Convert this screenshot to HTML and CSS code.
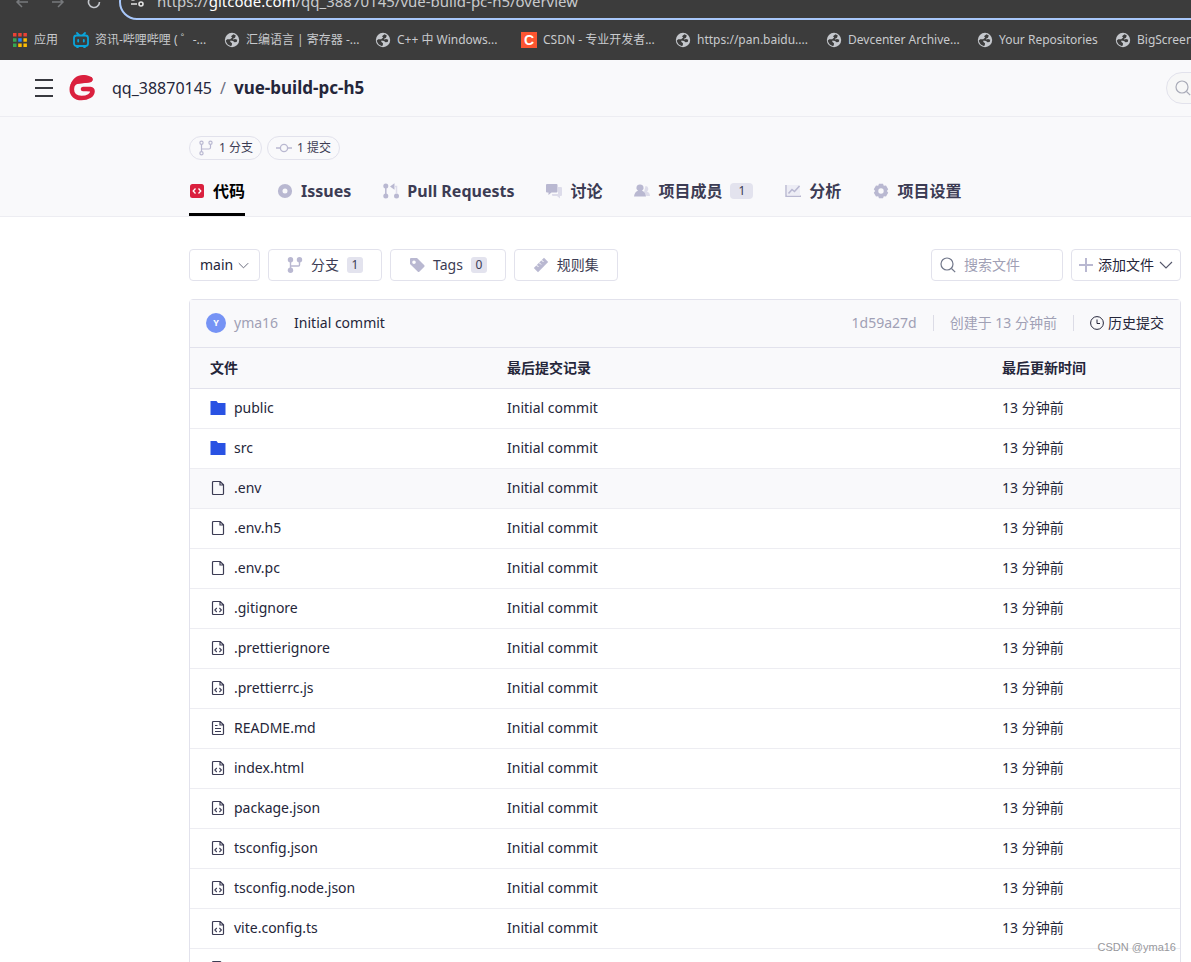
FILE: index.html
```
<!DOCTYPE html>
<html lang="zh-CN">
<head>
<meta charset="utf-8">
<title>qq_38870145/vue-build-pc-h5</title>
<link rel="stylesheet" href="styles.css">
</head>
<body>
<svg class="sprite" aria-hidden="true">
  <symbol id="globe" viewBox="0 0 16 16"><circle cx="8" cy="8" r="7.2" fill="#c4c7cc"/><path d="M9.5 2.2 7 4.2l1.2 1.4-2 1.6H3.2L1.8 8.6c.2 1.400 1 2.800 2 3.800l2.800 1.700 1.200-.6.2-2.200-1.800-1.500.3-1.200 2.500.3 1.500 1.400 2.200-.2.6-2.300-2.200-.8-1.700.6L8.700 7l2.300-1.300.8-2.200z" fill="#3c3c3c"/></symbol>
  <symbol id="branch" viewBox="0 0 16 16"><g fill="none" stroke="#b9b8d1" stroke-width="1.200"><circle cx="3.500" cy="2.800" r="1.600"/><circle cx="12.500" cy="2.800" r="1.600"/><circle cx="3.500" cy="13.200" r="1.600"/><path d="M3.500 4.400v7.200M3.500 9h7.500q1.500 0 1.500-1.500V4.400"/></g></symbol>
  <symbol id="branch-solid" viewBox="0 0 16 16"><g fill="#b9b8d1"><circle cx="3.500" cy="2.800" r="2.700"/><circle cx="12.500" cy="2.800" r="2.700"/><circle cx="3.500" cy="13.200" r="2.700"/></g><path d="M3.500 3v10M3.500 9h8q1 0 1-1V4" fill="none" stroke="#b9b8d1" stroke-width="1.400"/></symbol>
  <symbol id="commit" viewBox="0 0 16 16"><g fill="none" stroke="#b9b8d1" stroke-width="1.300"><circle cx="8" cy="8" r="3.600"/><path d="M0 8h4.400M11.600 8H16"/></g></symbol>
  <symbol id="chevron" viewBox="0 0 14 14"><path d="m1 4 6 6 6-6" fill="none" stroke="#55576b" stroke-width="1.100"/></symbol>
  <symbol id="search" viewBox="0 0 16 16"><g fill="none" stroke="currentColor" stroke-width="1.200"><circle cx="7" cy="7" r="6"/><path d="m11.500 11.500 3.700 3.700"/></g></symbol>
  <symbol id="folder" viewBox="0 0 16 16"><path d="M.5 1h6l1.500 2h7.500v12H.5z" fill="#2952e3"/></symbol>
  <symbol id="file" viewBox="0 0 16 16"><path d="M3.500 1.500h6.700l3.300 3.300v8.700q0 1-1 1h-9q-1 0-1-1v-11q0-1 1-1zM10 1.800v3.200h3.200" fill="none" stroke="#3c3c54" stroke-width="1.200"/></symbol>
  <symbol id="file-code" viewBox="0 0 16 16"><use href="#file"/><path d="m6.800 8-2 2 2 2M9.400 8l2 2-2 2" fill="none" stroke="#3c3c54" stroke-width="1.100"/></symbol>
  <symbol id="file-text" viewBox="0 0 16 16"><use href="#file"/><path d="M5 5.500h2.500M5 8.500h6M5 11.500h6" fill="none" stroke="#3c3c54" stroke-width="1.200"/></symbol>
</svg>

<div class="app">
  <div class="browser">
    <div class="address-row">
      <svg class="nav-icon" viewBox="0 0 16 16"><path d="M14 8H3M8 3 3 8l5 5" fill="none" stroke="#77797c" stroke-width="1.500"/></svg>
      <svg class="nav-icon" viewBox="0 0 16 16"><path d="M2 8h11M8 3l5 5-5 5" fill="none" stroke="#77797c" stroke-width="1.500"/></svg>
      <svg class="nav-icon" viewBox="0 0 16 16"><path d="M13.500 8A5.500 5.500 0 1 1 12 4.200M13 1v4H9" fill="none" stroke="#c4c7cc" stroke-width="1.600"/></svg>
      <div class="address">
        <svg class="icon" viewBox="0 0 16 16"><g fill="none" stroke="#e3e3e3" stroke-width="1.600"><circle cx="4" cy="5" r="2"/><path d="M8 5h6M2 11h6"/><circle cx="12" cy="11" r="2"/></g></svg>
        <span>https://<b>gitcode.com</b>/qq_38870145/vue-build-pc-h5/overview</span>
      </div>
    </div>
    <nav class="bookmarks">
      <a class="bookmark apps" href="#"><svg class="icon" viewBox="0 0 16 16"><path fill="#e94235" d="M1 1h3.500v3.500H1zM6.200 1h3.500v3.500H6.200zM11.400 1h3.500v3.500h-3.500z"/><path fill="#34a853" d="M1 6.200h3.500v3.500H1zM1 11.400h3.500v3.500H1z"/><path fill="#2486fc" d="M6.200 6.200h3.500v3.500H6.200z"/><path fill="#fbbc04" d="M11.400 6.200h3.500v3.500h-3.500zM6.200 11.400h3.500v3.500H6.200zM11.400 11.400h3.500v3.500h-3.500z"/></svg><span>应用</span></a>
      <a class="bookmark" href="#"><svg class="icon" viewBox="0 0 16 16"><g fill="none" stroke="#0ba3d9" stroke-width="1.800" stroke-linecap="round"><rect x="1" y="3.500" width="14" height="10.500" rx="2.500"/><path d="m4 1 2 2M12 1l-2 2M5.200 8v1.500M10.800 8v1.500M4 15h1M11 15h1"/></g></svg><span>资讯-哔哩哔哩 ( ゜-...</span></a>
      <a class="bookmark" href="#"><svg class="icon"><use href="#globe"/></svg><span>汇编语言 | 寄存器 -...</span></a>
      <a class="bookmark mid" href="#"><svg class="icon"><use href="#globe"/></svg><span>C++ 中 Windows...</span></a>
      <a class="bookmark long" href="#"><i class="csdn">C</i><span>CSDN - 专业开发者...</span></a>
      <a class="bookmark" href="#"><svg class="icon"><use href="#globe"/></svg><span>https://pan.baidu....</span></a>
      <a class="bookmark" href="#"><svg class="icon"><use href="#globe"/></svg><span>Devcenter Archive...</span></a>
      <a class="bookmark short" href="#"><svg class="icon"><use href="#globe"/></svg><span>Your Repositories</span></a>
      <a class="bookmark" href="#"><svg class="icon"><use href="#globe"/></svg><span>BigScreen</span></a>
    </nav>
  </div>

  <header class="site-header">
    <button class="menu" aria-label="菜单"><i></i><i></i><i></i></button>
    <svg class="logo" viewBox="0 0 28 28"><path d="M22.500 5.500C19 7 16 7 12.500 7 7.500 7 3.800 10 3.800 15.200c0 5.500 4 8.800 9.700 8.800 6.200 0 11-2.800 11-6.800 0-2.400-3-2.400-9.500-2.200" fill="none" stroke="#da203e" stroke-width="4.600" stroke-linecap="round" stroke-linejoin="round"/><path d="M2.500 11C4 5 9 1 15 1c5 0 9.500 1.500 9.500 4.500 0 2-1.500 3-3 3L8 10z" fill="#da203e"/></svg>
    <div class="crumbs"><a href="#">qq_38870145</a><span class="slash">/</span><a class="repo" href="#">vue-build-pc-h5</a></div>
    <button class="round-search" aria-label="搜索"><svg class="icon"><use href="#search"/></svg></button>
  </header>

  <section class="repo-head">
    <div class="chips">
      <a class="chip" href="#"><svg class="icon"><use href="#branch"/></svg>1 分支</a>
      <a class="chip" href="#"><svg class="icon"><use href="#commit"/></svg>1 提交</a>
    </div>
    <nav class="tabs">
      <a class="tab active" href="#"><svg class="icon" viewBox="0 0 16 16"><rect x="1" y="1" width="14" height="14" rx="2.500" fill="#da203e"/><path d="M6.500 5.500 4.200 8l2.300 2.500M9.500 5.500 11.800 8l-2.300 2.500" fill="none" stroke="#fff" stroke-width="1.300"/></svg>代码</a>
      <a class="tab" href="#"><svg class="icon" viewBox="0 0 16 16"><circle cx="8" cy="8" r="4.800" fill="none" stroke="#b9b8d1" stroke-width="4.600"/></svg>Issues</a>
      <a class="tab" href="#"><svg class="icon" viewBox="0 0 16 16"><g fill="#b9b8d1"><circle cx="2.800" cy="3" r="2.500"/><circle cx="2.800" cy="13" r="2.500"/><circle cx="13.500" cy="13" r="2.500"/><path d="M7 3.500 11.500.2v6.600z"/></g><path d="M2.800 3v10" stroke="#b9b8d1" stroke-width="1.500"/><path d="M11 3.500h2.500V11" fill="none" stroke="#dddcea" stroke-width="1.500"/></svg>Pull Requests</a>
      <a class="tab" href="#"><svg class="icon" viewBox="0 0 16 16"><path d="M12 4h3q1 0 1 1v7q0 1-1 1h-1v2.500L11 13H7q-1 0-1-1v-1h6z" fill="#dddcea"/><path d="M1 1h9.500q1 0 1 1v6.500q0 1-1 1H5.500L2.500 12V9.500H1q-1 0-1-1V2q0-1 1-1z" fill="#b9b8d1"/></svg>讨论</a>
      <a class="tab" href="#"><svg class="icon" viewBox="0 0 16 16"><path d="M11.500 3a3 3 0 0 1 1.500 5.500q3 1 3 4.500h-3.500L10 9z" fill="#dddcea"/><path d="M6 1.500a3.400 3.400 0 0 1 2 6.300q3.500 1.200 4 5.700H0q.5-4.500 4-5.700a3.400 3.400 0 0 1 2-6.300z" fill="#b9b8d1"/></svg>项目成员<span class="count">1</span></a>
      <a class="tab" href="#"><svg class="icon" viewBox="0 0 16 16"><path d="M1 2v11.300h15" fill="none" stroke="#b9b8d1" stroke-width="1.400"/><path d="M2 2h13v10.500H2z" fill="#ededf5"/><path d="m3.500 10.500 3.500-4 2.500 2L14.500 3" fill="none" stroke="#b9b8d1" stroke-width="1.600"/></svg>分析</a>
      <a class="tab" href="#"><svg class="icon" viewBox="0 0 16 16"><path fill="#b9b8d1" fill-rule="evenodd" d="M6 .8h4l.8 2 2.200-.2 2.200 3.600L13.900 8l1.300 1.800-2.200 3.600-2.200-.2-.8 2H6l-.8-2-2.200.2L.8 9.800 2.100 8 .8 6.200 3 2.600l2.200.2zM8 5.300a2.700 2.700 0 1 0 0 5.400 2.700 2.700 0 0 0 0-5.400z"/></svg>项目设置</a>
    </nav>
  </section>

  <main class="content">
    <div class="toolbar">
      <div class="branch-select">
        <select aria-label="分支"><option>main</option></select>
        <svg class="caret"><use href="#chevron"/></svg>
      </div>
      <button class="btn"><svg class="icon"><use href="#branch-solid"/></svg>分支<span class="badge">1</span></button>
      <button class="btn"><svg class="icon" viewBox="0 0 16 16"><path fill="#b9b8d1" fill-rule="evenodd" d="M2 1h6l7.300 7.300q.7.700 0 1.400l-5 5q-.7.700-1.400 0L1 7V2q0-1 1-1zm3 2.500a1.800 1.800 0 1 0 0 3.600 1.800 1.800 0 0 0 0-3.600z"/></svg>Tags<span class="badge">0</span></button>
      <button class="btn"><svg class="icon" viewBox="0 0 16 16"><path d="m11 .8 4.200 4.200L5 15.200.8 11z" fill="#b9b8d1"/><path d="m3.500 8 2 2M6 5.500l2 2M8.500 3l2 2" stroke="#fff" stroke-width="1"/></svg>规则集</button>
      <label class="file-search"><svg class="icon"><use href="#search"/></svg><input type="search" placeholder="搜索文件" aria-label="搜索文件"></label>
      <button class="btn add"><svg class="plus" viewBox="0 0 14 14"><path d="M7 0v14M0 7h14" stroke="#b9b8d1" stroke-width="2"/></svg>添加文件<svg class="caret-large"><use href="#chevron"/></svg></button>
    </div>

    <div class="files">
      <div class="commit-bar">
        <span class="avatar">Y</span>
        <a class="author" href="#">yma16</a>
        <a class="message" href="#">Initial commit</a>
        <span class="meta hash">1d59a27d</span>
        <span class="meta divided">创建于 13 分钟前</span>
        <a class="history divided" href="#"><svg class="clock" viewBox="0 0 14 14"><g fill="none" stroke="#25263a" stroke-width="1"><circle cx="7" cy="7" r="6.400"/><path d="M7 3.500v4h3"/></g></svg>历史提交</a>
      </div>
      <table>
        <thead><tr><th class="col-file">文件</th><th class="col-commit">最后提交记录</th><th class="col-time">最后更新时间</th></tr></thead>
        <tbody>
          <tr><td><a href="#"><svg class="icon"><use href="#folder"/></svg>public</a></td><td>Initial commit</td><td>13 分钟前</td></tr>
          <tr><td><a href="#"><svg class="icon"><use href="#folder"/></svg>src</a></td><td>Initial commit</td><td>13 分钟前</td></tr>
          <tr class="hovered"><td><a href="#"><svg class="icon"><use href="#file"/></svg>.env</a></td><td>Initial commit</td><td>13 分钟前</td></tr>
          <tr><td><a href="#"><svg class="icon"><use href="#file"/></svg>.env.h5</a></td><td>Initial commit</td><td>13 分钟前</td></tr>
          <tr><td><a href="#"><svg class="icon"><use href="#file"/></svg>.env.pc</a></td><td>Initial commit</td><td>13 分钟前</td></tr>
          <tr><td><a href="#"><svg class="icon"><use href="#file-code"/></svg>.gitignore</a></td><td>Initial commit</td><td>13 分钟前</td></tr>
          <tr><td><a href="#"><svg class="icon"><use href="#file-code"/></svg>.prettierignore</a></td><td>Initial commit</td><td>13 分钟前</td></tr>
          <tr><td><a href="#"><svg class="icon"><use href="#file-code"/></svg>.prettierrc.js</a></td><td>Initial commit</td><td>13 分钟前</td></tr>
          <tr><td><a href="#"><svg class="icon"><use href="#file-text"/></svg>README.md</a></td><td>Initial commit</td><td>13 分钟前</td></tr>
          <tr><td><a href="#"><svg class="icon"><use href="#file-code"/></svg>index.html</a></td><td>Initial commit</td><td>13 分钟前</td></tr>
          <tr><td><a href="#"><svg class="icon"><use href="#file-code"/></svg>package.json</a></td><td>Initial commit</td><td>13 分钟前</td></tr>
          <tr><td><a href="#"><svg class="icon"><use href="#file-code"/></svg>tsconfig.json</a></td><td>Initial commit</td><td>13 分钟前</td></tr>
          <tr><td><a href="#"><svg class="icon"><use href="#file-code"/></svg>tsconfig.node.json</a></td><td>Initial commit</td><td>13 分钟前</td></tr>
          <tr><td><a href="#"><svg class="icon"><use href="#file-code"/></svg>vite.config.ts</a></td><td>Initial commit</td><td>13 分钟前</td></tr>
          <tr><td><a href="#"><svg class="icon"><use href="#file"/></svg></a></td><td></td><td></td></tr>
        </tbody>
      </table>
    </div>
  </main>
  <div class="watermark">CSDN @yma16</div>
</div>
</body>
</html>
```
FILE: styles.css
```
* { box-sizing: border-box; }
body {
  margin: 0;
  background: #fff;
  color: #25263a;
  font: 14px/20px "Noto Sans", "Noto Sans CJK SC", sans-serif;
}
a { color: inherit; text-decoration: none; }
button, select, input { font: inherit; color: inherit; margin: 0; }
.sprite { display: none; }
.icon { width: 16px; height: 16px; flex: none; }
.app { position: relative; height: 100vh; overflow: hidden; }

/* Browser chrome */
.browser { background: #3c3c3c; color: #c8cacd; height: 60px; overflow: hidden; }
.address-row { display: flex; align-items: flex-end; height: 20px; padding-left: 14px; }
.nav-icon { width: 16px; height: 16px; flex: none; margin: 0 20px 10px 0; }
.address {
  display: flex;
  align-items: center;
  gap: 12px;
  flex: 1;
  height: 36px;
  margin: 0 -40px 0 -3px;
  padding: 0 0 2px 8px;
  border: 2px solid #a8c7fa;
  border-radius: 18px;
  font-size: 15px;
}
.address b { font-weight: 400; color: #fff; }
.bookmarks { display: flex; align-items: center; gap: 16px; height: 39px; padding-left: 12px; font-size: 12px; }
.bookmark { display: flex; align-items: center; gap: 6px; flex: none; width: 135px; white-space: nowrap; }
.bookmark.apps { width: 45px; }
.bookmark.mid { width: 130px; }
.bookmark.long { width: 138px; }
.bookmark.short { width: 122px; }
.csdn { width: 16px; height: 16px; background: #fc5531; color: #fff; font: 700 14px/16px "Liberation Sans", sans-serif; text-align: center; }

/* Site header */
.site-header { display: flex; align-items: center; height: 57px; padding-left: 35px; background: #f9f9fb; border-bottom: 1px solid #ededf2; }
.menu { display: flex; flex-direction: column; justify-content: space-between; width: 18px; height: 18px; padding: 0; border: 0; background: none; }
.menu i { height: 2px; background: #38393f; }
.logo { width: 28px; height: 28px; margin: 0 16px 0 15px; }
.crumbs { display: flex; gap: 8px; font-size: 16px; }
.slash { color: #6e7082; }
.repo { font-size: 17px; font-weight: 700; }
.round-search { display: flex; align-items: center; width: 64px; height: 32px; margin: 0 -39px 0 auto; padding: 0 8px; border: 1px solid #e2e2ec; border-radius: 16px; background: #f7f7f7; color: #a9abb8; }

/* Repository heading */
.repo-head { padding: 19px 10px 0 189px; background: #f9f9fb; border-bottom: 1px solid #ededf2; color: #3c3c54; }
.chips { display: flex; gap: 5px; }
.chip { display: flex; align-items: center; gap: 5px; height: 24px; padding: 0 8px; border: 1px solid #e2e2ec; border-radius: 12px; font-size: 12px; }
.tabs { display: flex; gap: 32px; height: 56px; }
.tab { display: flex; align-items: center; gap: 8px; padding-top: 9px; border-bottom: 3px solid transparent; font-size: 16px; font-weight: 700; white-space: nowrap; }
.tab.active { border-color: #000; color: #000; }
.count { padding: 0 8px; border-radius: 4px; background: #e3e3ee; font-size: 12px; line-height: 16px; font-weight: 400; }

/* Toolbar */
.content { padding: 32px 10px 0 189px; }
.toolbar { display: flex; gap: 8px; height: 32px; }
.branch-select { position: relative; display: flex; }
.branch-select select { appearance: none; padding: 0 25px 0 10px; border: 1px solid #e2e2ec; border-radius: 4px; background: #fff; }
.caret { position: absolute; right: 11px; top: 11px; width: 11px; height: 11px; pointer-events: none; }
.btn { display: flex; align-items: center; gap: 8px; padding: 0 18px; border: 1px solid #e2e2ec; border-radius: 4px; background: #fff; color: #3c3c54; white-space: nowrap; }
.badge { width: 16px; border-radius: 3px; background: #e3e3ee; font-size: 12px; line-height: 16px; text-align: center; }
.file-search { display: flex; align-items: center; gap: 8px; width: 132px; margin-left: auto; padding: 0 8px; border: 1px solid #e2e2ec; border-radius: 4px; color: #71778a; }
.file-search input { flex: 1; min-width: 0; padding: 0; border: 0; outline: 0; background: none; }
.file-search input::placeholder { color: #a0a0b5; opacity: 1; }
.add { gap: 5px; padding: 0 7px; color: #25263a; }
.plus { width: 14px; height: 14px; }
.caret-large { width: 14px; height: 14px; }

/* File list */
.files { margin-top: 18px; border: 1px solid #e2e2ec; border-radius: 4px; }
.commit-bar { display: flex; align-items: center; height: 48px; padding: 0 16px 2px; background: #f9f9fb; border-bottom: 1px solid #e2e2ec; white-space: nowrap; }
.avatar { width: 20px; height: 20px; margin-right: 8px; border-radius: 50%; background: #7693f5; color: #fff; font-size: 9px; font-weight: 700; text-align: center; }
.author, .meta { color: #a0a0b5; }
.message { margin-left: 16px; }
.hash { margin-left: auto; }
.divided { display: flex; align-items: center; gap: 4px; }
.divided::before { content: ""; width: 1px; height: 16px; margin: 0 12px 0 16px; background: #dcdce6; }
.clock { width: 14px; height: 14px; }
table { width: 100%; table-layout: fixed; border-collapse: separate; border-spacing: 0; }
th { height: 41px; padding: 0 20px; background: #f9f9fb; border-bottom: 1px solid #e2e2ec; text-align: left; font-weight: 700; }
td { height: 40px; padding: 0 20px 2px; border-bottom: 1px solid #ededf2; }
td a { display: flex; align-items: center; gap: 8px; }
.hovered td { background: #f9f9fb; }
.col-file { width: 30%; }
.col-commit { width: 50%; }
.col-time { width: 20%; }
.watermark { position: absolute; right: 15px; bottom: 8px; color: #97979c; font: 11px/14px "Liberation Sans", sans-serif; }
```
